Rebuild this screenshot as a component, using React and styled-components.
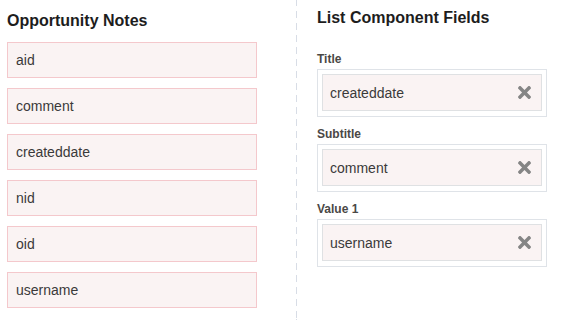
import React from 'react';
import styled, { createGlobalStyle } from 'styled-components';

const Global = createGlobalStyle`
  body {
    margin: 0;
    background: #fff;
    font-family: "Liberation Sans", Arial, sans-serif;
  }
`

const Page = styled.div`
  display: flex;
  height: 320px;
`

const LeftCol = styled.div`
  width: 296px;
  box-sizing: border-box;
  padding: 11px 0 0 7px;
`

const Heading = styled.h2`
  margin: 0 0 ${p => p.gap || 11}px;
  font-size: 16px;
  line-height: 20px;
  font-weight: bold;
  color: #1d1d1d;
`

const List = styled.div`
  display: flex;
  flex-direction: column;
  gap: 10px;
`

const FieldPill = styled.div`
  width: 250px;
  height: 36px;
  box-sizing: border-box;
  display: flex;
  align-items: center;
  padding: 0 8px;
  border: 1px solid #f4c8cc;
  background: #faf3f3;
  font-size: 14px;
  color: #3a3a3a;
`

const Divider = styled.div`
  width: 1px;
  align-self: stretch;
  background: repeating-linear-gradient(to bottom, #d8dde6 0 7px, transparent 7px 12px);
  background-position: 0 -1px;
`

const RightCol = styled.div`
  flex: 1;
  padding: 8px 0 0 20px;
`

const Slots = styled.div`
  display: flex;
  flex-direction: column;
  gap: 10px;
`

const Slot = styled.div`
  display: flex;
  flex-direction: column;
  gap: 3px;
`

const Label = styled.div`
  font-size: 12px;
  line-height: 14px;
  font-weight: bold;
  color: #4a4846;
`

const SlotBox = styled.div`
  width: 230px;
  height: 48px;
  box-sizing: border-box;
  padding: 4px 4px 5px;
  border: 1px solid #dfe3e8;
  background: #fff;
`

const Chip = styled.div`
  height: 100%;
  box-sizing: border-box;
  display: flex;
  align-items: center;
  justify-content: space-between;
  padding: 0 10px 0 7px;
  border: 1px solid #dfe1e3;
  background: #faf3f3;
  font-size: 14px;
  color: #3a3a3a;
`

const Remove = styled.svg`
  width: 13px;
  height: 13px;
  fill: #858585;
  flex: none;
`

const TimesIcon = () => (
  <Remove viewBox="0 80 352 352">
    <path d="M242.72 256l100.07-100.07c12.28-12.28 12.28-32.19 0-44.48l-22.24-22.24c-12.28-12.28-32.19-12.28-44.48 0L176 189.28 75.93 89.21c-12.28-12.28-32.19-12.28-44.48 0L9.21 111.45c-12.28 12.28-12.28 32.19 0 44.48L109.28 256 9.21 356.07c-12.28 12.28-12.28 32.19 0 44.48l22.24 22.24c12.28 12.28 32.2 12.28 44.48 0L176 322.72l100.07 100.07c12.28 12.28 32.2 12.28 44.48 0l22.24-22.24c12.28-12.28 12.28-32.19 0-44.48L242.72 256z" />
  </Remove>
)

const fields = ['aid', 'comment', 'createddate', 'nid', 'oid', 'username']

const slots = [
  { label: 'Title', value: 'createddate' },
  { label: 'Subtitle', value: 'comment' },
  { label: 'Value 1', value: 'username' },
]

const App = () => {
  return (
    <Page>
      <Global />
      <LeftCol>
        <Heading>Opportunity Notes</Heading>
        <List>
          {fields.map(f => <FieldPill key={f}>{f}</FieldPill>)}
        </List>
      </LeftCol>
      <Divider />
      <RightCol>
        <Heading gap={24}>List Component Fields</Heading>
        <Slots>
          {slots.map(s => (
            <Slot key={s.label}>
              <Label>{s.label}</Label>
              <SlotBox>
                <Chip>
                  {s.value}
                  <TimesIcon />
                </Chip>
              </SlotBox>
            </Slot>
          ))}
        </Slots>
      </RightCol>
    </Page>
  )
}

export default App
